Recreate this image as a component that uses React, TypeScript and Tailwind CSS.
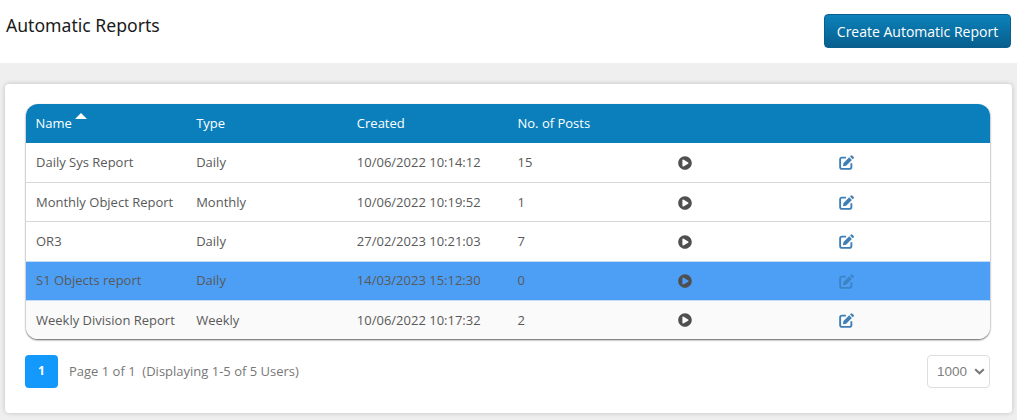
import { FaPlayCircle } from "react-icons/fa";

const rows = [
  { name: "Daily Sys Report", type: "Daily", created: "10/06/2022 10:14:12", posts: "15" },
  { name: "Monthly Object Report", type: "Monthly", created: "10/06/2022 10:19:52", posts: "1" },
  { name: "OR3", type: "Daily", created: "27/02/2023 10:21:03", posts: "7" },
  { name: "S1 Objects report", type: "Daily", created: "14/03/2023 15:12:30", posts: "0", selected: true },
  { name: "Weekly Division Report", type: "Weekly", created: "10/06/2022 10:17:32", posts: "2", last: true },
];

function EditIcon({ className }: { className: string }) {
  return (
    <svg viewBox="0 0 16 16" width="15" height="15" className={className}>
      <path
        d="M7.4 2.8H3.2A2 2 0 0 0 1.2 4.8v8a2 2 0 0 0 2 2h8a2 2 0 0 0 2-2V8.8"
        fill="none"
        stroke="currentColor"
        strokeWidth="2"
      />
      <path d="M4.8 8.6 10.9 2.5l2.8 2.8-6.1 6.1-3.4.6Z" fill="currentColor" />
      <path d="M11.8 1.6 12.8.5q.6-.5 1.2 0l1.7 1.7q.5.6 0 1.2l-1.1 1Z" fill="currentColor" />
    </svg>
  );
}

export default function App() {
  return (
    <div className="h-[420px] w-[1017px] overflow-hidden bg-[#efefef] font-['Open_Sans',sans-serif]">
      {/* page title bar */}
      <header className="flex h-[63px] items-start justify-between bg-white pl-[6px] pr-[6px] pt-[14px]">
        <h1 className="font-['Noto_Sans',sans-serif] text-[17.6px] leading-[22px] text-[#1a1a1a]">Automatic Reports</h1>
        <button className="h-[34px] w-[187px] rounded-[4px] border border-[#0a5f8c] bg-gradient-to-b from-[#0c82bb] to-[#075f8e] text-[14px] text-white">
          Create Automatic Report
        </button>
      </header>

      <div className="px-[5px] pt-[21px]">
        <div className="h-[329px] rounded-[4px] bg-white px-[21px] pt-[20px] shadow-[0_0_5px_rgba(0,0,0,0.2)]">
          <div className="w-[964px] rounded-[12px] shadow-[0_1px_2px_rgba(0,0,0,0.65)]">
            <div className="grid h-[39px] grid-cols-6 items-center rounded-t-[12px] bg-[#0a7fbb] text-[13px] text-white">
              <div className="flex pl-[9.5px]">
                Name
                <span className="ml-[3px] mt-[-1px] h-0 w-0 border-x-[6px] border-b-[6px] border-x-transparent border-b-white" />
              </div>
              <div className="pl-[9.5px]">Type</div>
              <div className="pl-[9.5px]">Created</div>
              <div className="pl-[9.5px]">No. of Posts</div>
              <div />
              <div />
            </div>
            {rows.map((r) => (
              <div
                key={r.name}
                className={`grid h-[39.2px] grid-cols-6 items-center border-t text-[13px] text-[#595959] ${
                  r.selected ? "border-[#c6dcf5] bg-[#4c9ff5]" : r.last ? "rounded-b-[12px] border-[#c6dcf5] bg-[#fafafa]" : "border-[#d8d8d8] bg-white"
                } ${r.name === "Daily Sys Report" ? "border-t-0" : "pt-[1px]"}`}
              >
                <div className="pl-[10px]">{r.name}</div>
                <div className="pl-[9.5px]">{r.type}</div>
                <div className="pl-[9.5px]">{r.created}</div>
                <div className="pl-[9.5px]">{r.posts}</div>
                <div className="pl-[9px]">
                  <FaPlayCircle className="text-[14px] text-[#4f4f4f]" />
                </div>
                <div className="pl-[10px]">
                  <EditIcon className={r.selected ? "text-[#3d84c4]" : "text-[#3f7fb5]"} />
                </div>
              </div>
            ))}
          </div>

          <div className="mt-[16px] flex items-center justify-between">
            <div className="flex items-center">
              <button className="ml-[-1px] h-[33px] w-[33px] rounded-[4px] bg-[#1299fb] text-[12px] font-bold text-white">1</button>
              <span className="ml-[11px] text-[13px] text-[#777777]">Page 1 of 1&nbsp;&nbsp;(Displaying 1-5 of 5 Users)</span>
            </div>
            <div className="mr-[1px] flex h-[33px] w-[63px] items-center justify-between rounded-[4px] border border-[#dedede] pl-[9px] pr-[4px] pt-[1px] font-['Liberation_Sans',sans-serif] text-[13.5px] text-[#808080]">
              1000
              <svg width="11" height="7" viewBox="0 0 11 7" fill="none">
                <path d="M1.2 1.2 5.5 5.3 9.8 1.2" stroke="#777777" strokeWidth="2" />
              </svg>
            </div>
          </div>
        </div>
      </div>
    </div>
  );
}
